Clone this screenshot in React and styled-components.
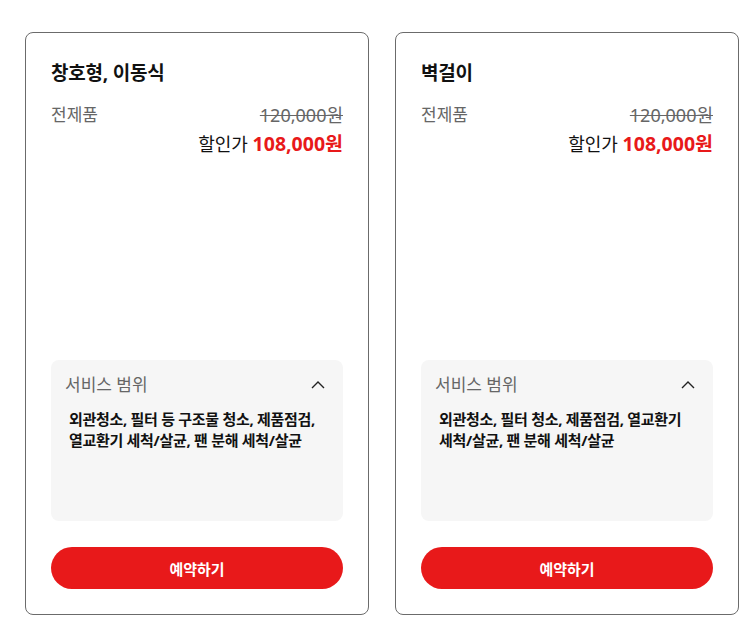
import styled, { createGlobalStyle } from 'styled-components';

const GlobalStyle = createGlobalStyle`
    body {
        margin: 0;
        background: #fff;
        font-family: "Noto Sans", "Noto Sans CJK KR", sans-serif;
        color: #111;
    }
`

const Page = styled.div`
    display: flex;
    gap: 26px;
    padding: 32px 0 0 25px;
`

const Card = styled.div`
    box-sizing: border-box;
    width: 344px;
    height: 583px;
    border: 1px solid #6b6b6b;
    border-radius: 8px;
    padding: 25px 25px 25px 25px;
    display: flex;
    flex-direction: column;
`

const Title = styled.h2`
    margin: 0;
    font-size: 19px;
    font-weight: 700;
    line-height: 30px;
    letter-spacing: -0.2px;
`

const PriceRow = styled.div`
    display: flex;
    justify-content: space-between;
    align-items: center;
    margin-top: 15px;
    font-size: 17px;
    line-height: 24px;
    color: #666;

    .original {
        font-size: 18px;
        text-decoration: line-through;
    }
`

const SaleRow = styled.div`
    margin-top: 4px;
    text-align: right;
    font-size: 18px;
    line-height: 26px;

    strong {
        font-size: 19.5px;
        color: #e8191a;
        font-weight: 700;
    }
`

const ServiceBox = styled.div`
    margin-top: auto;
    height: 161px;
    box-sizing: border-box;
    background: #f6f6f6;
    border-radius: 8px;
    padding: 14px 12px 0 14px;
`

const ServiceHeader = styled.div`
    display: flex;
    justify-content: space-between;
    align-items: center;
    font-size: 17px;
    line-height: 22px;
    color: #666;

    svg {
        margin-right: 6px;
    }
`

const ServiceText = styled.p`
    margin: 13px 0 0 4px;
    font-size: 15px;
    font-weight: 700;
    line-height: 21px;
    color: #111;
    letter-spacing: -0.3px;
    word-break: keep-all;
`

const ReserveButton = styled.button`
    margin-top: 26px;
    height: 42px;
    width: 100%;
    border: none;
    border-radius: 21px;
    background: #e8191a;
    color: #fff;
    font-family: inherit;
    font-size: 15px;
    font-weight: 700;
    cursor: pointer;
`

const ChevronUp = () => (
    <svg width="14" height="8" viewBox="0 0 14 8" fill="none">
        <path d="M1 7L7 1L13 7" stroke="#222" strokeWidth="1.4" />
    </svg>
)

const products = [
    {
        name: '창호형, 이동식',
        scope: '외관청소, 필터 등 구조물 청소, 제품점검, 열교환기 세척/살균, 팬 분해 세척/살균',
    },
    {
        name: '벽걸이',
        scope: '외관청소, 필터 청소, 제품점검, 열교환기 세척/살균, 팬 분해 세척/살균',
    },
]

const App = () => {
    return (
        <>
            <GlobalStyle />
            <Page>
                {products.map((item) => (
                    <Card key={item.name}>
                        <Title>{item.name}</Title>
                        <PriceRow>
                            <span>전제품</span>
                            <span className="original">120,000원</span>
                        </PriceRow>
                        <SaleRow>
                            할인가 <strong>108,000원</strong>
                        </SaleRow>
                        <ServiceBox>
                            <ServiceHeader>
                                <span>서비스 범위</span>
                                <ChevronUp />
                            </ServiceHeader>
                            <ServiceText>{item.scope}</ServiceText>
                        </ServiceBox>
                        <ReserveButton>예약하기</ReserveButton>
                    </Card>
                ))}
            </Page>
        </>
    );
}

export default App;
